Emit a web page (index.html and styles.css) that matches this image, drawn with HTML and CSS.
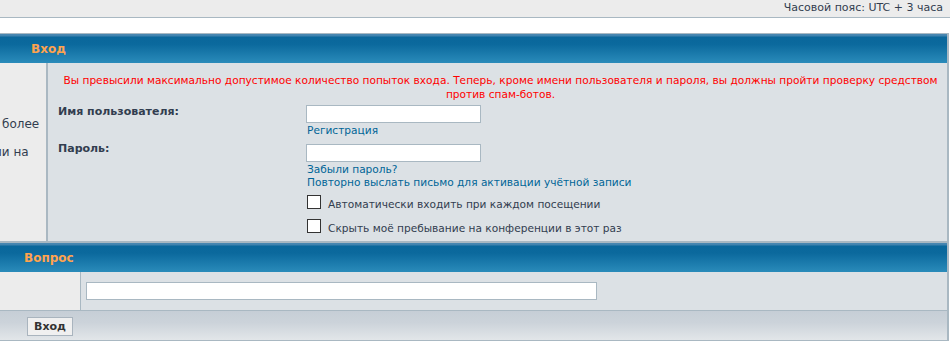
FILE: index.html
```html
<!DOCTYPE html>
<html lang="ru">
<head>
<meta charset="utf-8">
<title>Вход</title>
<link rel="stylesheet" href="styles.css">
</head>
<body>
<div class="datebar">Часовой пояс: UTC + 3 часа</div>
<div class="spacer"></div>

<div class="tablebg">
  <div class="cat"><span class="cat-title cat-title-login">Вход</span></div>
  <div class="row row-login">
    <div class="side side-login">
      <p class="side-line">более</p>
      <p class="side-line side-line-cut">ии на</p>
    </div>
    <div class="main main-login">
      <p class="error">Вы превысили максимально допустимое количество попыток входа. Теперь, кроме имени пользователя и пароля, вы должны пройти проверку средством против спам-ботов.</p>
      <div class="form">
        <label class="label" for="username">Имя пользователя:</label>
        <div class="field">
          <input class="input" id="username" type="text">
          <a class="link first-link" href="#">Регистрация</a>
        </div>
        <label class="label label-pass" for="password">Пароль:</label>
        <div class="field field-pass">
          <input class="input" id="password" type="password">
          <a class="link first-link" href="#">Забыли пароль?</a>
          <a class="link" href="#">Повторно выслать письмо для активации учётной записи</a>
        </div>
        <div class="checks">
          <label class="check"><input class="box" type="checkbox"><span class="check-text">Автоматически входить при каждом посещении</span></label>
          <label class="check"><input class="box" type="checkbox"><span class="check-text">Скрыть моё пребывание на конференции в этот раз</span></label>
        </div>
      </div>
    </div>
  </div>
</div>

<div class="tablebg tablebg-second">
  <div class="cat"><span class="cat-title cat-title-question">Вопрос</span></div>
  <div class="row row-question">
    <div class="side side-question"></div>
    <div class="main main-question">
      <input class="input input-wide" type="text">
    </div>
  </div>
  <div class="foot">
    <button class="btn" type="button">Вход</button>
  </div>
</div>
</body>
</html>
```

FILE: styles.css
```css
html, body {
  margin: 0;
  padding: 0;
  background: #ffffff;
}
body {
  width: 950px;
  overflow: hidden;
  font-family: "DejaVu Sans", Verdana, sans-serif;
  font-size: 11px;
  color: #323d4f;
}
p { margin: 0; }

.datebar {
  height: 17px;
  line-height: 15px;
  background: #ececec;
  border-bottom: 1px solid #a9b8c2;
  text-align: right;
  padding-right: 7px;
  font-size: 11px;
  color: #323d4f;
}
.spacer {
  height: 15px;
}

.tablebg {
  border: 1px solid #a9b8c2;
  border-left: 0;
  border-right-width: 2px;
  margin-right: 1px;
  background: #a9b8c2;
}

.cat {
  height: 29px;
  display: flex;
  align-items: center;
  background: linear-gradient(to bottom, #4a88b2 0, #3f82ae 2px, #0a679b 3px, #0b699d 35%, #2a8bba 100%);
}
.cat-title {
  font-weight: bold;
  font-size: 12px;
  color: #ffa34f;
}
.cat-title-login { padding-left: 31px; }
.cat-title-question { padding-left: 24px; }

.row {
  display: flex;
}
.row-login { height: 178px; }
.row-question { height: 38px; border-bottom: 1px solid #a9b8c2; }

.side {
  background: #ececec;
  flex: none;
}
.side-login {
  width: 46px;
  border-right: 2px solid #aab8c2;
  padding-top: 47px;
  box-sizing: content-box;
  overflow: hidden;
  font-size: 12px;
  line-height: 28px;
  white-space: nowrap;
}
.side-line { padding-left: 2px; }
.side-line-cut { margin-left: -6px; padding-left: 0; }
.side-question {
  width: 80px;
  border-right: 1px solid #a9b8c2;
}

.main {
  flex: 1;
  background: #dce1e5;
  font-size: 10.6px;
}
.main-login {
  padding: 10px 4px 0 10px;
}
.error {
  color: #ff0000;
  text-align: center;
  line-height: 14px;
  margin-bottom: 4px;
}

.form {
  display: grid;
  grid-template-columns: 248px auto;
  align-items: start;
}
.label {
  font-weight: bold;
  font-size: 11px;
  line-height: 14px;
  color: #323d4f;
}
.label-pass { margin-top: 5px; }
.field {
  display: flex;
  flex-direction: column;
  align-items: flex-start;
}
.field-pass { margin-top: 7px; }
.input {
  box-sizing: border-box;
  width: 175px;
  height: 18px;
  margin: 0;
  padding: 0 2px;
  border: 1px solid #a9b8c2;
  background: #ffffff;
  font: inherit;
}
.link {
  color: #006597;
  text-decoration: none;
  line-height: 13px;
  padding-left: 1px;
}
.first-link { margin-top: 1px; }

.checks {
  grid-column: 2;
  margin-top: 6px;
  display: flex;
  flex-direction: column;
}
.check {
  display: flex;
  align-items: flex-start;
  height: 24px;
  padding-left: 1px;
}
.box {
  appearance: none;
  -webkit-appearance: none;
  width: 14px;
  height: 14px;
  margin: 0;
  border: 1px solid #333333;
  background: #ffffff;
  flex: none;
}
.check-text {
  margin-left: 7px;
  padding-top: 2px;
  line-height: 14px;
}

.main-question {
  display: flex;
  align-items: center;
  padding-left: 5px;
}
.input-wide {
  width: 511px;
}

.foot {
  height: 29px;
  display: flex;
  align-items: center;
  padding-left: 27px;
  padding-top: 2px;
  box-sizing: border-box;
  background: linear-gradient(to bottom, #c6ced6 0, #ccd3da 40%, #e2e6e9 100%);
}
.btn {
  width: 46px;
  height: 19px;
  padding: 0;
  border: 1px solid #a9b4be;
  background: #f0f0f0;
  font-family: "DejaVu Sans", Verdana, sans-serif;
  font-weight: bold;
  font-size: 11px;
  color: #333333;
  line-height: 17px;
}
```
